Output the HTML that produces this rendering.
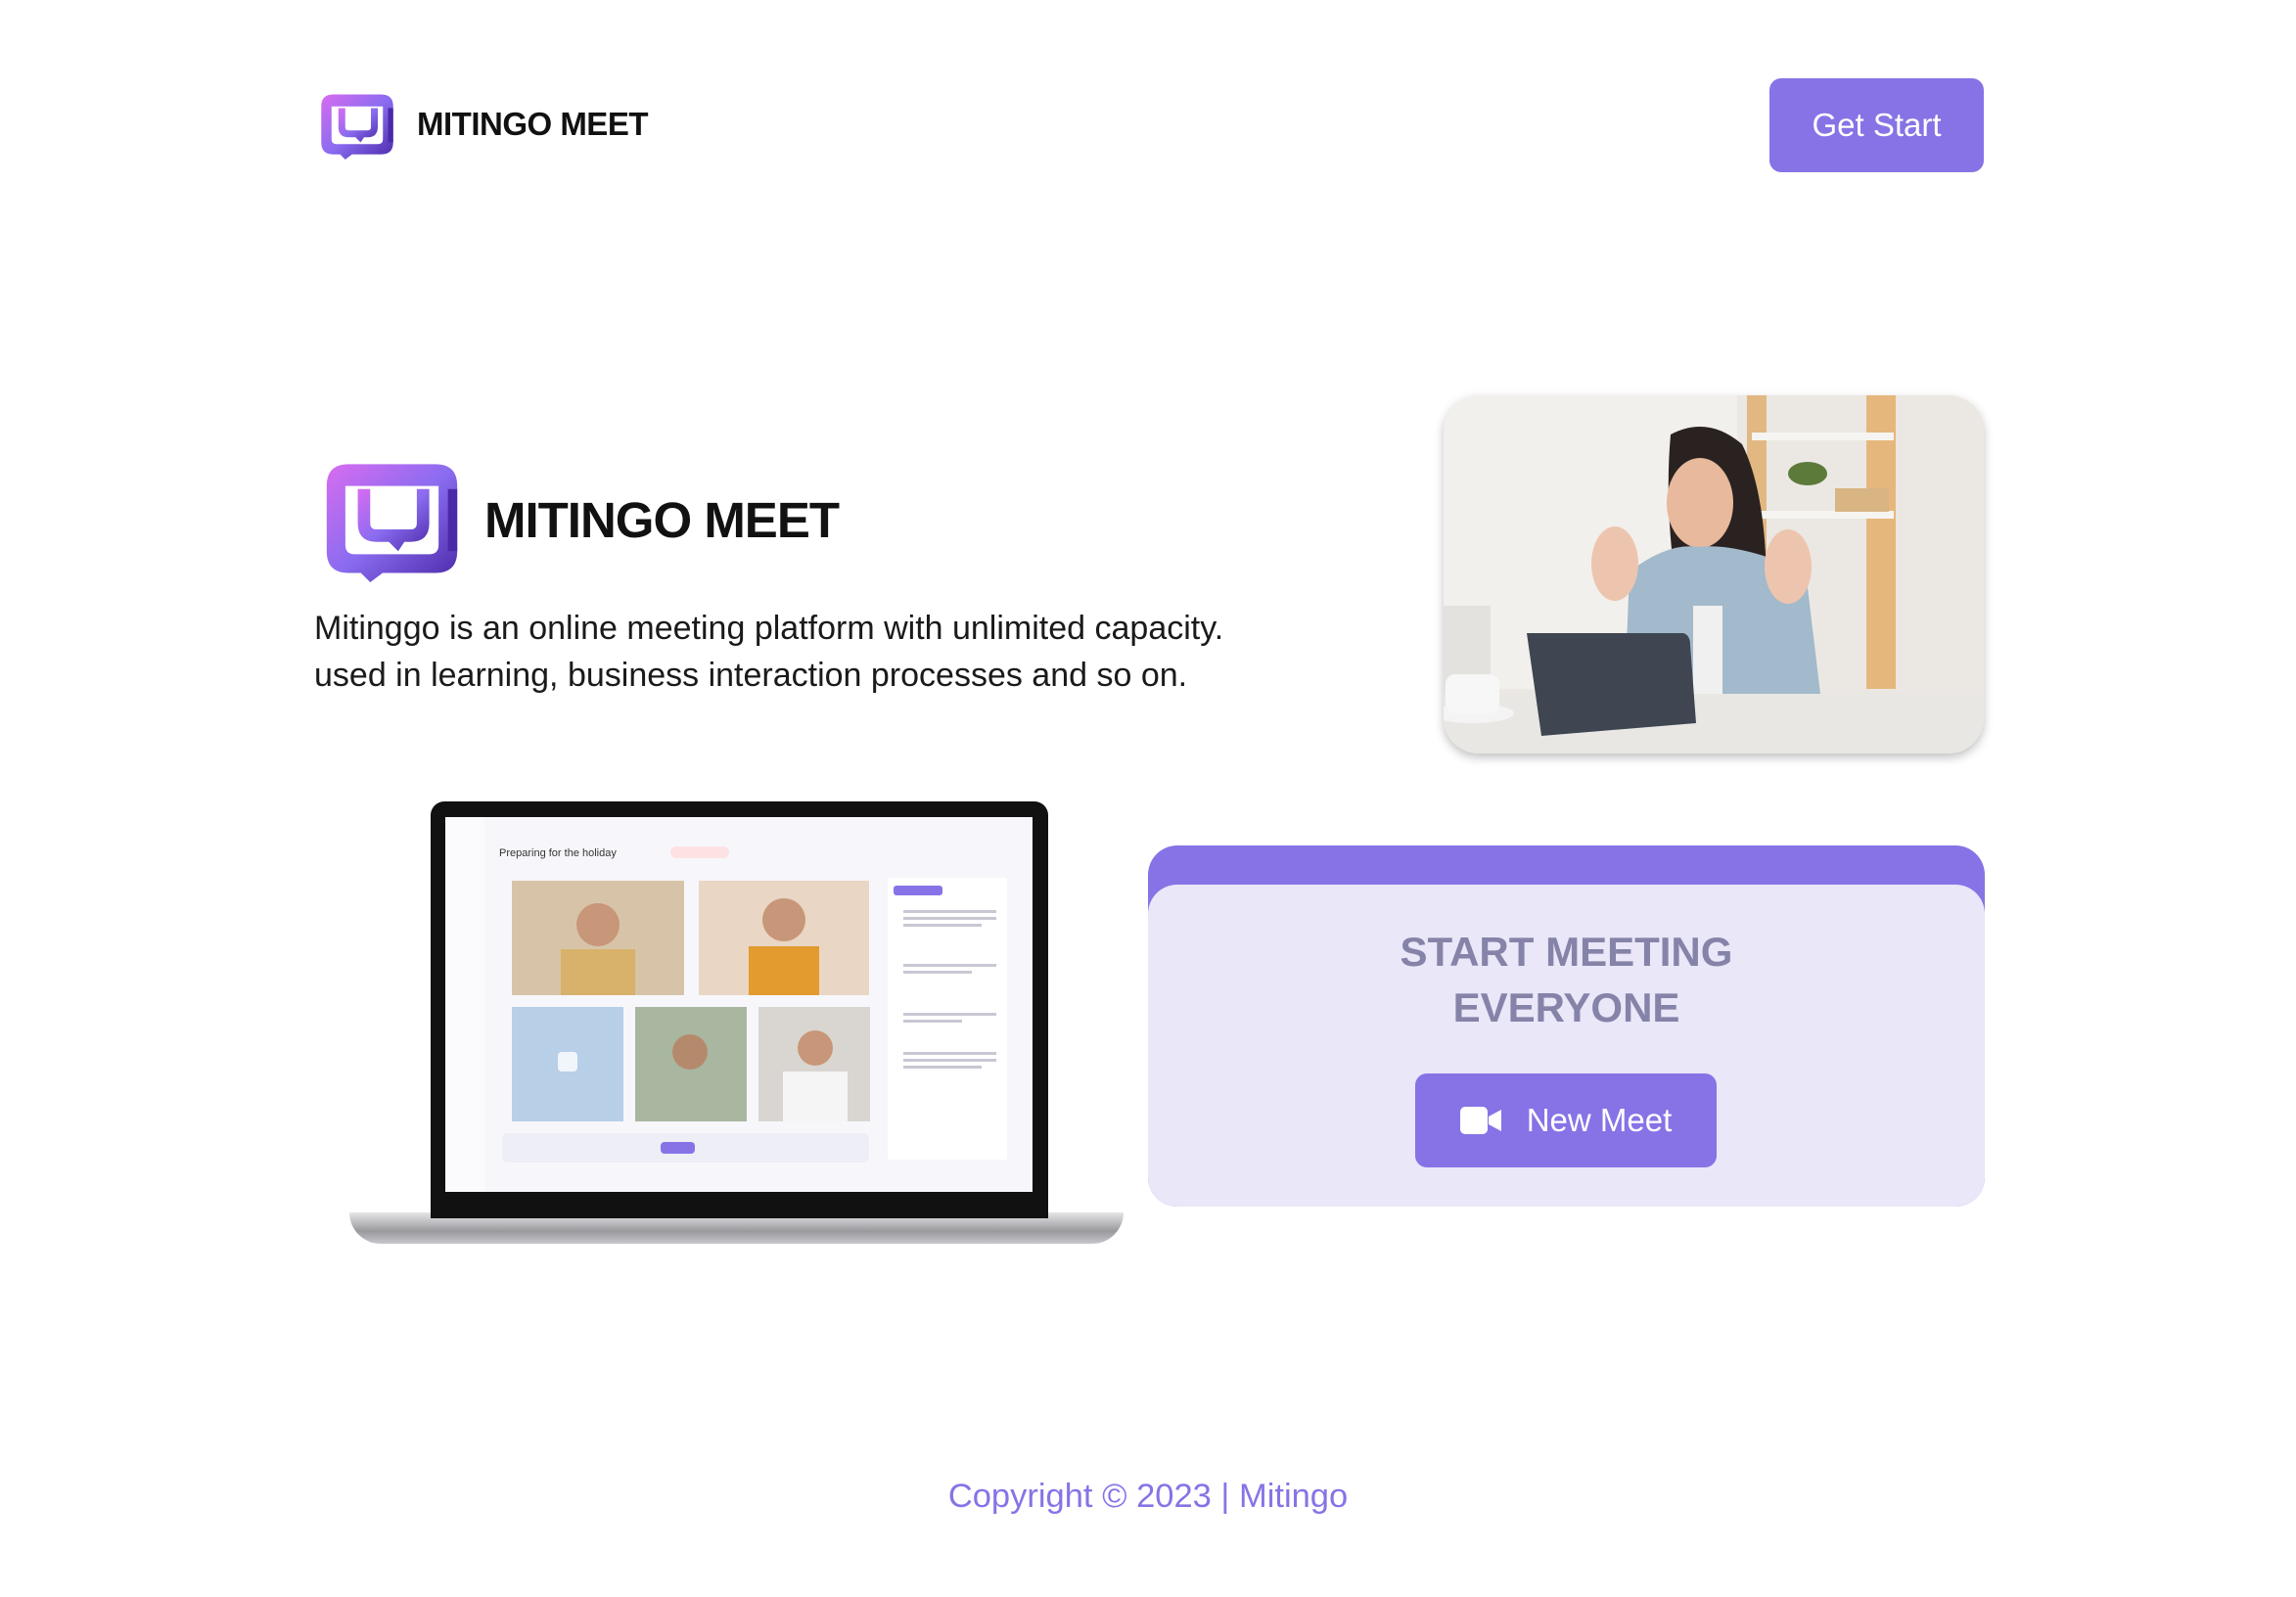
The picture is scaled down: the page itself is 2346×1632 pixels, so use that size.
<!DOCTYPE html>
<html><head><meta charset="utf-8"><style>
*{margin:0;padding:0;box-sizing:border-box}
body{width:2346px;height:1632px;background:#fff;font-family:"Liberation Sans",sans-serif;position:relative;overflow:hidden;color:#111}
.abs{position:absolute}
.btn{background:#8773e6;color:#fff;border-radius:12px;display:flex;align-items:center;justify-content:center}
</style></head><body>
<svg class="abs" style="left:321px;top:93px" width="88" height="70" viewBox="0 0 100 80">
<defs><linearGradient id="g1" x1="0" y1="0" x2="1" y2="1"><stop offset="0" stop-color="#d86cf0"/><stop offset=".5" stop-color="#8a6cf0"/><stop offset="1" stop-color="#4b2aa8"/></linearGradient></defs>
<path d="M8 18 Q8 4 22 4 H78 Q92 4 92 18 V60 Q92 74 78 74 H44 L36 80 L30 74 H22 Q8 74 8 60Z M20 18 V56 Q20 62 26 62 H74 Q80 62 80 56 V18Z" fill="url(#g1)" fill-rule="evenodd"/>
<path d="M28 20 V42 Q28 54 40 54 H48 L54 60 L58 54 H62 Q74 54 74 42 V20 H66 V42 Q66 46 62 46 H40 Q36 46 36 42 V20Z" fill="url(#g1)"/>
<rect x="86" y="20" width="6" height="40" fill="#4b2aa8"/>
</svg>
<div class="abs" style="left:426px;top:108px;font-size:33px;font-weight:bold;letter-spacing:-0.5px">MITINGO MEET</div>
<div class="abs btn" style="left:1808px;top:80px;width:219px;height:96px;font-size:33px">Get Start</div>

<svg class="abs" style="left:321px;top:468px" width="159" height="127" viewBox="0 0 100 80">
<path d="M8 18 Q8 4 22 4 H78 Q92 4 92 18 V60 Q92 74 78 74 H44 L36 80 L30 74 H22 Q8 74 8 60Z M20 18 V56 Q20 62 26 62 H74 Q80 62 80 56 V18Z" fill="url(#g1)" fill-rule="evenodd"/>
<path d="M28 20 V42 Q28 54 40 54 H48 L54 60 L58 54 H62 Q74 54 74 42 V20 H66 V42 Q66 46 62 46 H40 Q36 46 36 42 V20Z" fill="url(#g1)"/>
<rect x="86" y="20" width="6" height="40" fill="#4b2aa8"/>
</svg>
<div class="abs" style="left:495px;top:502px;font-size:51px;font-weight:bold;letter-spacing:-1px">MITINGO MEET</div>
<div class="abs" style="left:321px;top:618px;font-size:34px;line-height:48px;color:#1a1a1a">Mitinggo is an online meeting platform with unlimited capacity.<br>used in learning, business interaction processes and so on.</div>

<div class="abs" style="left:1475px;top:404px;width:552px;height:366px;border-radius:36px;overflow:hidden;box-shadow:0 4px 10px rgba(0,0,0,.25)">
<svg width="552" height="366" viewBox="0 0 552 366">
<rect width="552" height="366" fill="#ebe8e3"/>
<rect width="300" height="300" fill="#f2f0ec"/>
<rect x="310" y="0" width="20" height="300" fill="#e2b882"/>
<rect x="432" y="0" width="30" height="300" fill="#e6b77c"/>
<rect x="315" y="38" width="145" height="8" fill="#f6f4f0"/>
<rect x="315" y="118" width="145" height="8" fill="#f6f4f0"/>
<rect x="400" y="95" width="55" height="24" fill="#d9b583"/>
<ellipse cx="372" cy="80" rx="20" ry="12" fill="#5c7a3a"/>
<rect x="0" y="215" width="48" height="90" fill="#e4e2de"/>
<path d="M232 40 Q270 20 305 50 Q330 100 330 200 L240 210 Q225 120 232 40Z" fill="#2a2220"/>
<ellipse cx="262" cy="110" rx="34" ry="46" fill="#e8b99c"/>
<path d="M190 180 Q230 150 260 155 Q300 150 370 180 L385 305 H185Z" fill="#a3b9cc"/>
<rect x="255" y="215" width="30" height="90" fill="#f0f0f0"/>
<ellipse cx="175" cy="172" rx="24" ry="38" fill="#edc5ae"/>
<ellipse cx="352" cy="175" rx="24" ry="38" fill="#edc5ae"/>
<rect x="0" y="305" width="552" height="61" fill="#e9e7e3"/>
<path d="M85 243 L245 243 Q252 245 252 255 L258 335 L100 348 Z" fill="#3f4652"/>
<ellipse cx="30" cy="325" rx="42" ry="10" fill="#f4f4f4"/>
<rect x="2" y="285" width="55" height="40" rx="10" fill="#f7f7f7"/>
</svg></div>

<div class="abs" style="left:357px;top:1239px;width:791px;height:32px;border-radius:0 0 40px 40px;background:linear-gradient(#e6e6e8,#9a9a9e 60%,#c8c8cc)"></div>
<div class="abs" style="left:440px;top:819px;width:631px;height:426px;background:#111;border-radius:14px 14px 0 0"></div>
<div class="abs" style="left:455px;top:835px;width:600px;height:383px;background:#f7f7fb;overflow:hidden">
<svg width="600" height="383" viewBox="0 0 600 383">
<rect width="40" height="383" fill="#fbfbfd"/>
<text x="55" y="40" font-size="11" font-family="Liberation Sans" fill="#333">Preparing for the holiday</text>
<rect x="230" y="30" width="60" height="12" rx="6" fill="#fde2e4"/>
<rect x="68" y="65" width="176" height="117" fill="#d7c4a8"/>
<rect x="259" y="65" width="174" height="117" fill="#e9d6c4"/>
<rect x="68" y="194" width="114" height="117" fill="#b8cfe8"/>
<rect x="194" y="194" width="114" height="117" fill="#a9b7a0"/>
<rect x="320" y="194" width="114" height="117" fill="#d9d6d2"/>
<circle cx="156" cy="110" r="22" fill="#c89678"/><rect x="118" y="135" width="76" height="47" fill="#d8b26a"/>
<circle cx="346" cy="105" r="22" fill="#c89678"/><rect x="310" y="132" width="72" height="50" fill="#e39a2f"/>
<rect x="115" y="240" width="20" height="20" rx="4" fill="#fff" opacity=".8"/>
<circle cx="250" cy="240" r="18" fill="#b58a6c"/>
<circle cx="378" cy="236" r="18" fill="#c89678"/><rect x="345" y="260" width="66" height="51" fill="#f5f5f5"/>
<rect x="452" y="62" width="122" height="288" fill="#fff"/>
<rect x="458" y="70" width="50" height="10" rx="3" fill="#8773e6"/>
<g fill="#c8c8d4"><rect x="468" y="95" width="95" height="3"/><rect x="468" y="102" width="95" height="3"/><rect x="468" y="109" width="80" height="3"/><rect x="468" y="150" width="95" height="3"/><rect x="468" y="157" width="70" height="3"/><rect x="468" y="200" width="95" height="3"/><rect x="468" y="207" width="60" height="3"/><rect x="468" y="240" width="95" height="3"/><rect x="468" y="247" width="95" height="3"/><rect x="468" y="254" width="80" height="3"/></g>
<rect x="58" y="323" width="375" height="30" rx="6" fill="#eeeef6"/>
<rect x="220" y="332" width="35" height="12" rx="4" fill="#8773e6"/>
</svg></div>

<div class="abs" style="left:1173px;top:864px;width:855px;height:369px;background:#8773e6;border-radius:30px"></div>
<div class="abs" style="left:1173px;top:904px;width:855px;height:329px;background:#e9e7f8;border-radius:30px"></div>
<div class="abs" style="left:1173px;top:944px;width:855px;text-align:center;font-size:42px;line-height:57px;font-weight:bold;color:#8583a8">START MEETING<br>EVERYONE</div>
<div class="abs btn" style="left:1446px;top:1097px;width:308px;height:96px;font-size:33px">
<svg width="42" height="28" viewBox="0 0 42 28" style="margin-right:26px"><rect x="0" y="0" width="28" height="28" rx="5" fill="#fff"/><path d="M29 10 L42 3 V25 L29 18Z" fill="#fff"/></svg>New Meet</div>

<div class="abs" style="left:0;top:1510px;width:2346px;text-align:center;font-size:34.5px;color:#8773e6">Copyright © 2023 | Mitingo</div>
</body></html>
